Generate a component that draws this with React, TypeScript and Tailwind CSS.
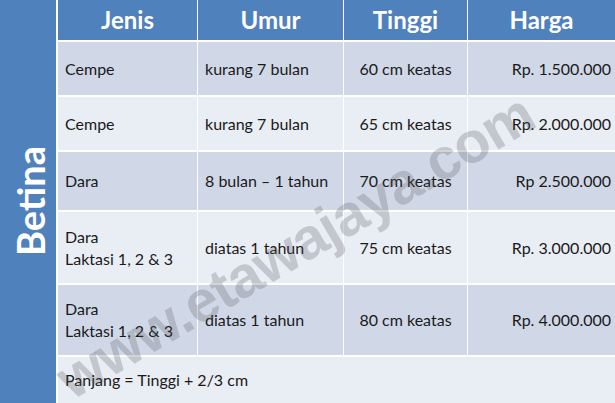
import React from "react";

const rows = [
  { jenis: ["Cempe"], umur: "kurang 7 bulan", tinggi: "60 cm keatas", harga: "Rp. 1.500.000", odd: true },
  { jenis: ["Cempe"], umur: "kurang 7 bulan", tinggi: "65 cm keatas", harga: "Rp. 2.000.000", odd: false },
  { jenis: ["Dara"], umur: "8 bulan – 1 tahun", tinggi: "70 cm keatas", harga: "Rp 2.500.000", odd: true },
  { jenis: ["Dara", "Laktasi 1, 2 & 3"], umur: "diatas 1 tahun", tinggi: "75 cm keatas", harga: "Rp. 3.000.000", odd: false },
  { jenis: ["Dara", "Laktasi 1, 2 & 3"], umur: "diatas 1 tahun", tinggi: "80 cm keatas", harga: "Rp. 4.000.000", odd: true },
];

export default function App() {
  return (
    <div
      className="relative w-[615px] h-[403px] overflow-hidden bg-white flex gap-[2px] text-[#1a1a1a]"
      style={{ fontFamily: "Lato, 'Open Sans', sans-serif" }}
    >
      <div className="w-[56px] h-full bg-[#4f81bd] flex items-center justify-center">
        <span className="[writing-mode:vertical-rl] rotate-180 text-white font-bold text-[38px] leading-none pr-[3px]">
          Betina
        </span>
      </div>
      <div className="flex-1 grid grid-cols-[139px_145px_123px_1fr] grid-rows-[40px_53px_53px_58px_71px_70px_1fr] gap-x-px gap-y-[2px]">
        {["Jenis", "Umur", "Tinggi", "Harga"].map((h) => (
          <div key={h} className="bg-[#4f81bd] flex items-center justify-center text-white font-bold text-[24px]">
            {h}
          </div>
        ))}
        {rows.map((r, i) => {
          const bg = r.odd ? "bg-[#d0d8e8]" : "bg-[#e9edf4]";
          return (
            <React.Fragment key={i}>
              <div className={`${bg} flex flex-col justify-center pl-[7px] text-[16px] leading-[22px]`}>
                {r.jenis.map((j) => (
                  <span key={j}>{j}</span>
                ))}
              </div>
              <div className={`${bg} flex items-center pl-[7px] text-[16px]`}>{r.umur}</div>
              <div className={`${bg} flex items-center justify-center text-[16px]`}>{r.tinggi}</div>
              <div className={`${bg} flex items-center justify-end pr-[4px] text-[16px]`}>{r.harga}</div>
            </React.Fragment>
          );
        })}
        <div className="col-span-4 bg-[#e9edf4] flex items-center pl-[7px] text-[16px]">
          Panjang = Tinggi + 2/3 cm
        </div>
      </div>
      <div
        className="pointer-events-none absolute left-[295px] top-[246px] -translate-x-1/2 -translate-y-1/2 -rotate-[30.5deg] whitespace-nowrap font-bold text-[58px] leading-none tracking-[-1px] text-[#555]/25"
        style={{ fontFamily: "'Liberation Sans', Arial, sans-serif" }}
      >
        www.etawajaya.com
      </div>
    </div>
  );
}
